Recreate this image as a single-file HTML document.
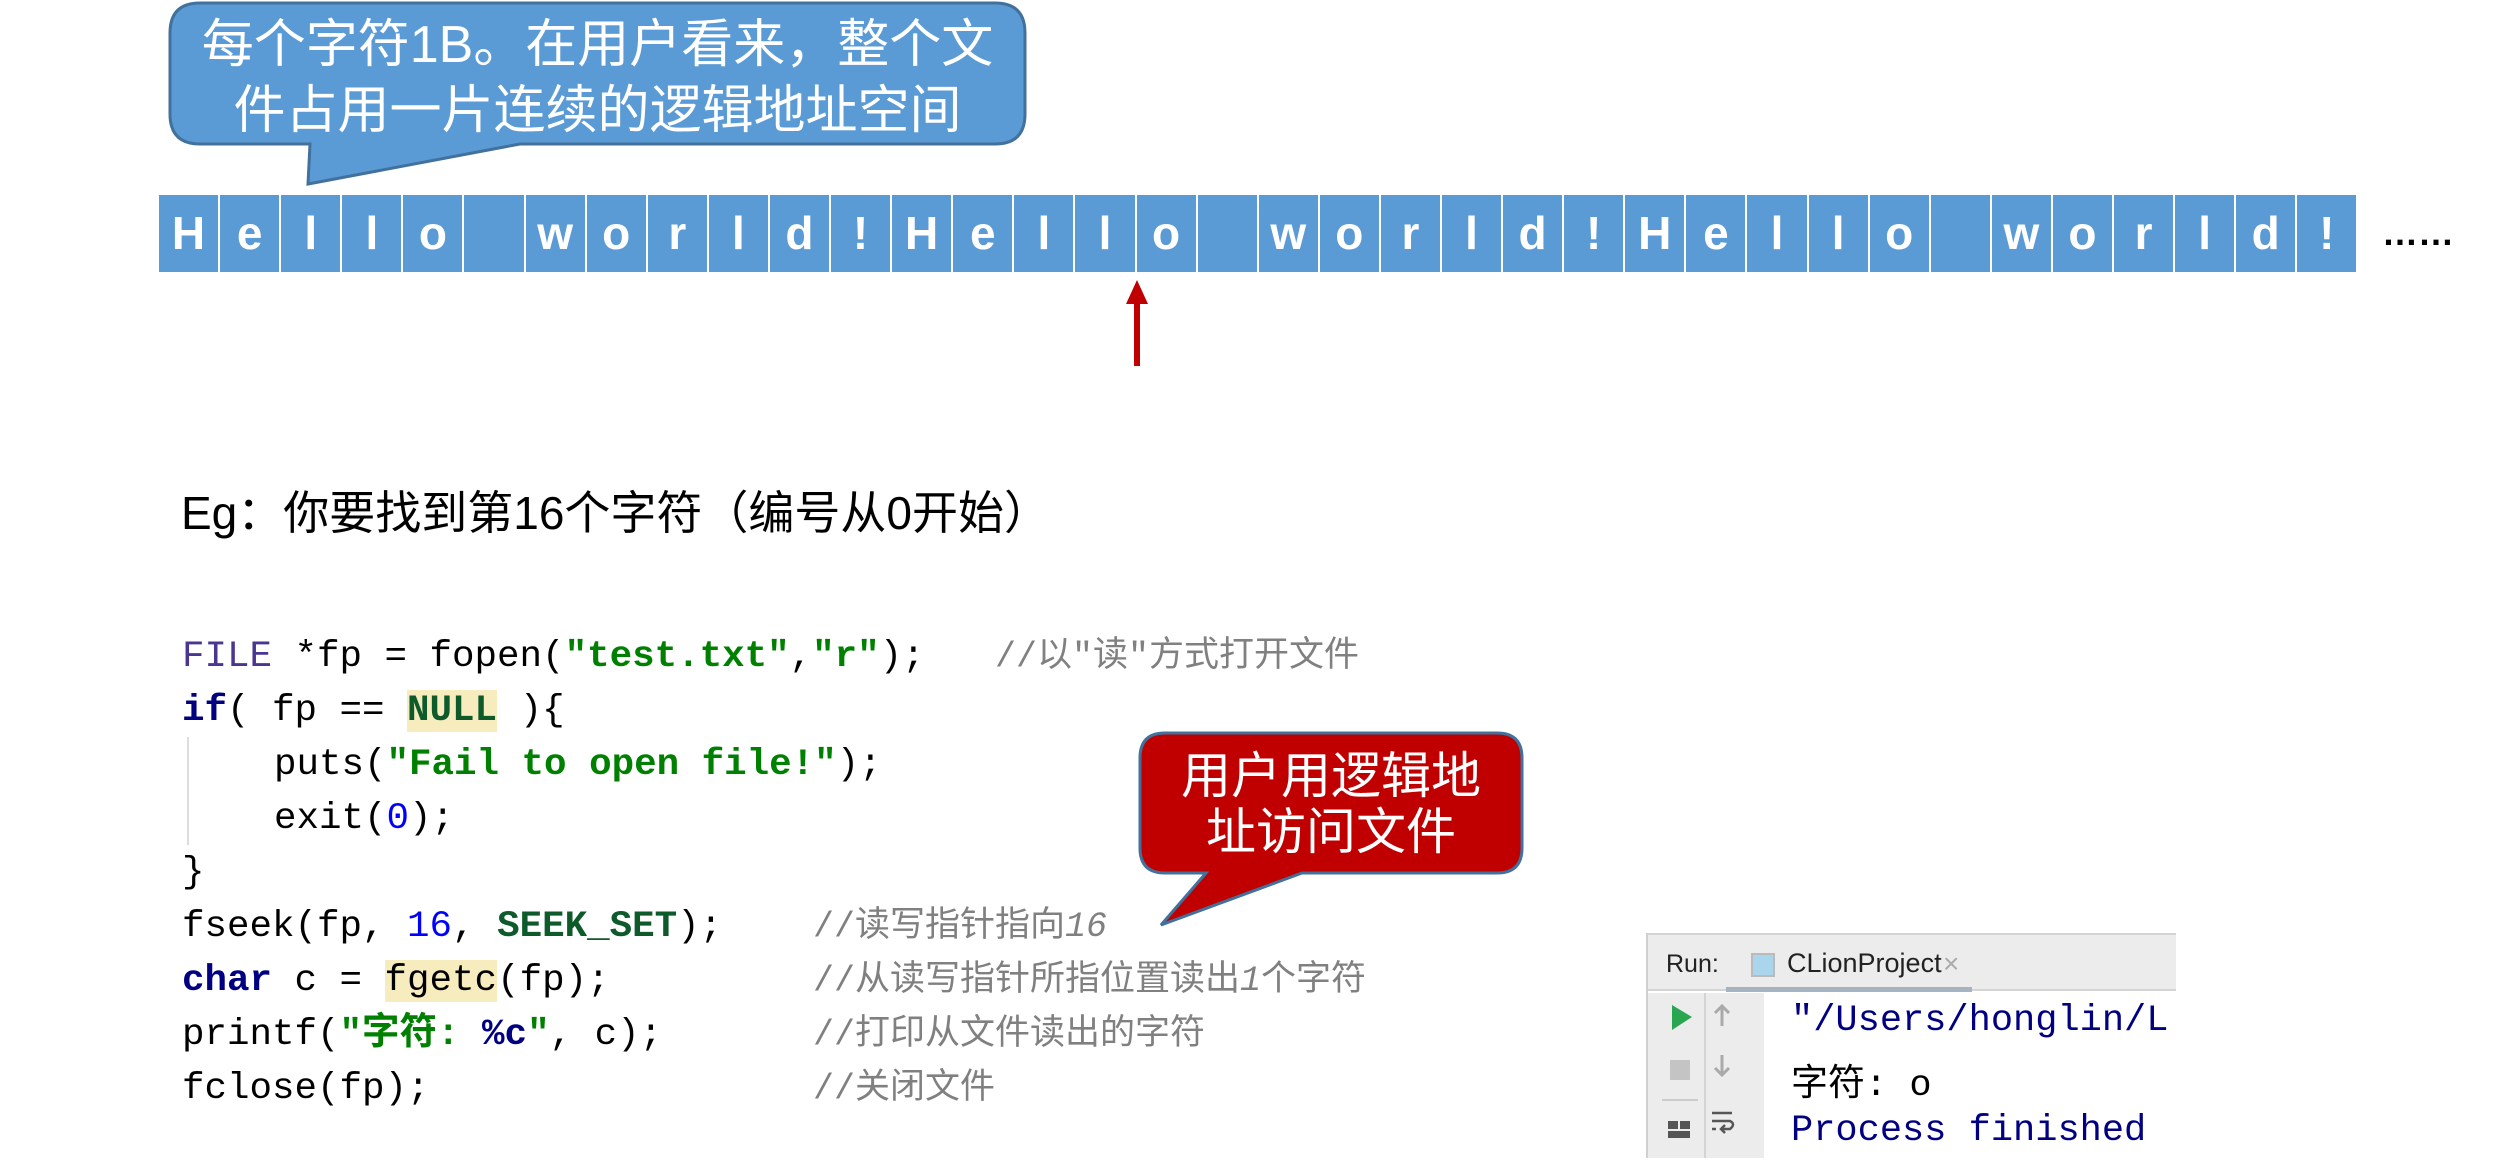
<!DOCTYPE html>
<html><head><meta charset="utf-8"><style>
*{margin:0;padding:0;box-sizing:border-box}
body{width:2512px;height:1174px;background:#fff;position:relative;overflow:hidden;font-family:"Liberation Sans","Noto Sans CJK SC",sans-serif}
.abs{position:absolute}
.bar{position:absolute;left:159px;top:195px;height:77px;display:flex}
.cell{width:59.1px;margin-right:2px;height:77px;background:#5b9bd5;color:#fff;font-weight:bold;font-size:46px;text-align:center;line-height:77px}
.code{position:absolute;left:182px;font-family:"Liberation Mono","Noto Sans CJK SC",monospace;font-size:37.5px;color:#000;white-space:pre;line-height:54px;height:54px}
.cm{position:absolute;font-family:"Liberation Mono","Noto Sans CJK SC",monospace;font-size:35px;color:#808080;white-space:pre;line-height:54px}
.kw{color:#000080;font-weight:bold}
.st{color:#008000;font-weight:bold}
.cn{color:#0e5a2a;font-weight:bold}
.nm{color:#0000ff}
.hl{background:#f7ecbe}
.out{position:absolute;left:1791px;font-family:"Liberation Mono","Noto Sans CJK SC",monospace;font-size:37px;color:#000080;white-space:pre}
</style></head><body>

<svg class="abs" style="left:0;top:0" width="2512" height="1174">
  <path d="M200,3 H995 Q1025,3 1025,33 V114 Q1025,144 995,144 H520 L308,184 L310,144 H200 Q170,144 170,114 V33 Q170,3 200,3 Z" fill="#5b9bd5" stroke="#41719c" stroke-width="3"/>
  <path d="M1165,733 H1497 Q1522,733 1522,758 V848 Q1522,873 1497,873 H1302 L1161,925 L1206,873 H1165 Q1140,873 1140,848 V758 Q1140,733 1165,733 Z" fill="#c00000" stroke="#41719c" stroke-width="3"/>
  <rect x="1134" y="300" width="6" height="66" fill="#c00000"/>
  <path d="M1137,280 L1126,304 L1148,304 Z" fill="#c00000"/>
  <line x1="188" y1="737" x2="188" y2="845" stroke="#ddd" stroke-width="2"/>
</svg>

<div class="abs" style="left:170px;top:12px;width:855px;text-align:center;color:#fff;font-size:52px;line-height:66px">每个字符1B。在用户看来，整个文<br>件占用一片连续的逻辑地址空间</div>

<div class="bar">
<div class="cell">H</div><div class="cell">e</div><div class="cell">l</div><div class="cell">l</div><div class="cell">o</div><div class="cell"></div><div class="cell">w</div><div class="cell">o</div><div class="cell">r</div><div class="cell">l</div><div class="cell">d</div><div class="cell">!</div>
<div class="cell">H</div><div class="cell">e</div><div class="cell">l</div><div class="cell">l</div><div class="cell">o</div><div class="cell"></div><div class="cell">w</div><div class="cell">o</div><div class="cell">r</div><div class="cell">l</div><div class="cell">d</div><div class="cell">!</div>
<div class="cell">H</div><div class="cell">e</div><div class="cell">l</div><div class="cell">l</div><div class="cell">o</div><div class="cell"></div><div class="cell">w</div><div class="cell">o</div><div class="cell">r</div><div class="cell">l</div><div class="cell">d</div><div class="cell">!</div>
</div>
<div class="abs" style="left:2382px;top:212px;font-size:36px;font-weight:bold;color:#000;letter-spacing:0px">……</div>

<div class="abs" style="left:181px;top:484px;font-size:46px;line-height:58px;color:#000">Eg：你要找到第16个字符（编号从0开始）</div>

<div class="code" style="top:630px"><span style="color:#4a3590">FILE</span> *fp = fopen(<span class="st">"test.txt"</span>,<span class="st">"r"</span>);</div>
<div class="cm" style="left:995px;top:630px">//以"读"方式打开文件</div>
<div class="code" style="top:684px"><span class="kw">if</span>( fp == <span class="cn hl">NULL</span> ){</div>
<div class="code" style="top:738px;left:274px">puts(<span class="st">"Fail to open file!"</span>);</div>
<div class="code" style="top:792px;left:274px">exit(<span class="nm">0</span>);</div>
<div class="code" style="top:846px">}</div>
<div class="code" style="top:900px">fseek(fp, <span class="nm">16</span>, <span class="cn">SEEK_SET</span>);</div>
<div class="cm" style="left:813px;top:900px">//读写指针指向<i>16</i></div>
<div class="code" style="top:954px"><span class="kw">char</span> c = <span class="hl">fgetc</span>(fp);</div>
<div class="cm" style="left:813px;top:954px">//从读写指针所指位置读出<i>1</i>个字符</div>
<div class="code" style="top:1008px">printf(<span class="st">"字符: <span style="color:#000080">%c</span>"</span>, c);</div>
<div class="cm" style="left:813px;top:1008px">//打印从文件读出的字符</div>
<div class="code" style="top:1062px">fclose(fp);</div>
<div class="cm" style="left:813px;top:1062px">//关闭文件</div>

<div class="abs" style="left:1140px;top:748px;width:382px;text-align:center;color:#fff;font-size:50px;line-height:56px">用户用逻辑地<br>址访问文件</div>

<!-- CLion panel -->
<div class="abs" style="left:1646px;top:933px;width:530px;height:225px;background:#fff;border-left:2px solid #d0d0d0">
  <div class="abs" style="left:0;top:0;width:528px;height:58px;background:#ececec;border-top:2px solid #d4d4d4;border-bottom:2px solid #d4d4d4"></div>
  <div class="abs" style="left:78px;top:54px;width:246px;height:5px;background:#a7b3c3"></div>
  <div class="abs" style="left:18px;top:17px;font-size:25px;color:#222">Run:</div>
  <div class="abs" style="left:103px;top:20px;width:24px;height:24px;border:2px solid #bbb;background:#a9d6ec"></div>
  <div class="abs" style="left:139px;top:15px;font-size:27px;color:#222">CLionProject</div>
  <div class="abs" style="left:295px;top:15px;font-size:28px;color:#aaa">×</div>
  <div class="abs" style="left:0;top:60px;width:58px;height:165px;background:#ececec;border-right:2px solid #d4d4d4"></div>
  <div class="abs" style="left:58px;top:60px;width:58px;height:165px;background:#ececec"></div>
  <svg class="abs" style="left:0;top:60px" width="116" height="165">
    <path d="M24,12 L44,24 L24,37 Z" fill="#2aa650"/>
    <rect x="22" y="67" width="20" height="20" fill="#c4c4c4"/>
    <line x1="14" y1="107" x2="50" y2="107" stroke="#ccc" stroke-width="2"/>
    <rect x="20" y="128" width="10" height="8" fill="#555"/><rect x="32" y="128" width="10" height="8" fill="#555"/><rect x="20" y="138" width="22" height="7" fill="#555"/>
    <path d="M74,33 V13 M67,20 L74,13 L81,20" stroke="#aaa" stroke-width="3" fill="none"/>
    <path d="M74,62 V82 M67,75 L74,82 L81,75" stroke="#aaa" stroke-width="3" fill="none"/>
    <path d="M64,120 H84 M64,128 H82 Q88,131 82,136 H74 M64,136 H68 M77,132 L73,136 L77,140" stroke="#555" stroke-width="2.5" fill="none"/>
  </svg>
</div>
<div class="out" style="top:1000px">"/Users/honglin/L</div>
<div class="out" style="top:1052px;color:#000">字符: o</div>
<div class="out" style="top:1110px">Process finished</div>
</body></html>
